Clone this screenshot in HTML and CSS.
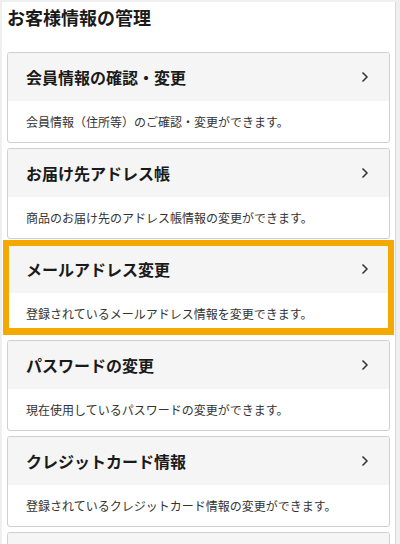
FILE: index.html
```html
<!DOCTYPE html>
<html lang="ja">
<head>
<meta charset="utf-8">
<title>お客様情報の管理</title>
<link rel="stylesheet" href="styles.css">
</head>
<body>
<div class="panel">
  <h1 class="page-title">お客様情報の管理</h1>
  <ul class="menu">
    <li class="card">
      <a class="card-head" href="#">
        <span class="card-title">会員情報の確認・変更</span>
        <svg class="chev" width="8" height="12" viewBox="0 0 8 12"><polyline points="1.5,1.5 6,6 1.5,10.5" fill="none" stroke="#333" stroke-width="1.5"/></svg>
      </a>
      <p class="card-body">会員情報（住所等）のご確認・変更ができます。</p>
    </li>
    <li class="card">
      <a class="card-head" href="#">
        <span class="card-title">お届け先アドレス帳</span>
        <svg class="chev" width="8" height="12" viewBox="0 0 8 12"><polyline points="1.5,1.5 6,6 1.5,10.5" fill="none" stroke="#333" stroke-width="1.5"/></svg>
      </a>
      <p class="card-body">商品のお届け先のアドレス帳情報の変更ができます。</p>
    </li>
    <li class="card card-active">
      <a class="card-head" href="#">
        <span class="card-title">メールアドレス変更</span>
        <svg class="chev" width="8" height="12" viewBox="0 0 8 12"><polyline points="1.5,1.5 6,6 1.5,10.5" fill="none" stroke="#333" stroke-width="1.5"/></svg>
      </a>
      <p class="card-body">登録されているメールアドレス情報を変更できます。</p>
    </li>
    <li class="card">
      <a class="card-head" href="#">
        <span class="card-title">パスワードの変更</span>
        <svg class="chev" width="8" height="12" viewBox="0 0 8 12"><polyline points="1.5,1.5 6,6 1.5,10.5" fill="none" stroke="#333" stroke-width="1.5"/></svg>
      </a>
      <p class="card-body">現在使用しているパスワードの変更ができます。</p>
    </li>
    <li class="card">
      <a class="card-head" href="#">
        <span class="card-title">クレジットカード情報</span>
        <svg class="chev" width="8" height="12" viewBox="0 0 8 12"><polyline points="1.5,1.5 6,6 1.5,10.5" fill="none" stroke="#333" stroke-width="1.5"/></svg>
      </a>
      <p class="card-body">登録されているクレジットカード情報の変更ができます。</p>
    </li>
    <li class="card">
      <a class="card-head" href="#">
        <span class="card-title">メールマガジン配信設定</span>
        <svg class="chev" width="8" height="12" viewBox="0 0 8 12"><polyline points="1.5,1.5 6,6 1.5,10.5" fill="none" stroke="#333" stroke-width="1.5"/></svg>
      </a>
      <p class="card-body">メールマガジンの配信設定を変更できます。</p>
    </li>
  </ul>
</div>
</body>
</html>
```
FILE: styles.css
```css
html {
  overflow: hidden;
}
body {
  margin: 0;
  background: #efefef;
  font-family: "Noto Sans CJK JP", "Noto Sans", sans-serif;
  color: #222;
}
.panel {
  margin: 2px 4px 0 2px;
  padding: 2px 5px 20px 5px;
  background: #fff;
  border-right: 1px solid #d9d9d9;
}
.page-title {
  margin: 0 0 22px 0;
  font-size: 18px;
  line-height: 26px;
  font-weight: 700;
  color: #1a1a1a;
}
.menu {
  list-style: none;
  margin: 0;
  padding: 0;
  display: flex;
  flex-direction: column;
  gap: 5px;
}
.card {
  position: relative;
  border: 1px solid #cfcfcf;
  border-radius: 3px;
  background: #fff;
}
.card-head {
  display: flex;
  align-items: center;
  justify-content: space-between;
  height: 48px;
  padding: 0 20px 0 18px;
  background: #f5f5f5;
  border-radius: 3px 3px 0 0;
  text-decoration: none;
  color: #1a1a1a;
}
.card-title {
  font-size: 16px;
  font-weight: 700;
  line-height: 20px;
}
.chev {
  display: block;
  margin-top: -1px;
}
.card-body {
  margin: 0;
  height: 41px;
  padding: 0 18px;
  display: flex;
  align-items: center;
  font-size: 12px;
  color: #333;
}
.card-active::after {
  content: "";
  position: absolute;
  top: -5px;
  left: -5px;
  right: -5px;
  bottom: -1px;
  border: 6px solid #f4a800;
  border-bottom-width: 7px;
  pointer-events: none;
}
```
